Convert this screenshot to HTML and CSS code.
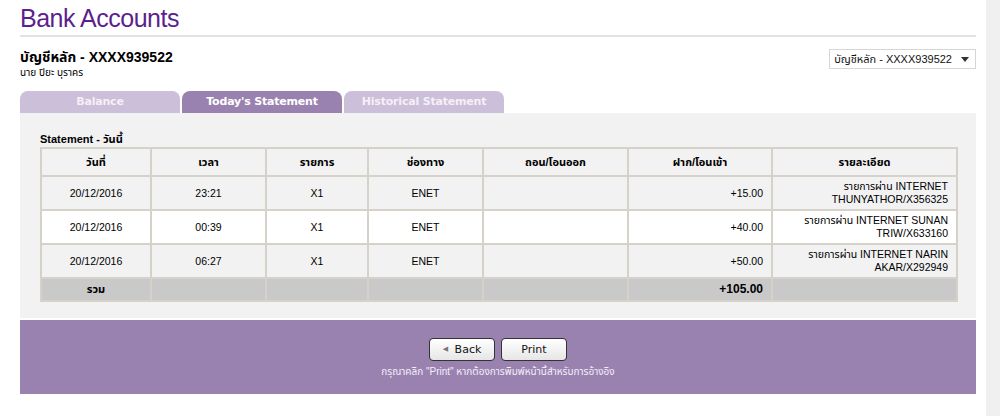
FILE: index.html
```html
<!DOCTYPE html>
<html>
<head>
<meta charset="utf-8">
<link rel="stylesheet" href="styles.css">
</head>
<body>
<div class="page">
  <div class="main">
    <h1 class="title">Bank Accounts</h1>
    <div class="acct-row">
      <div class="acct-info">
        <div class="acct-name">บัญชีหลัก - XXXX939522</div>
        <div class="acct-owner">นาย ปิยะ บุราคร</div>
      </div>
      <div class="select">
        <span>บัญชีหลัก - XXXX939522</span>
        <svg width="8" height="5" viewBox="0 0 8 5"><path d="M0 0h8L4 5z" fill="#333"/></svg>
      </div>
    </div>
    <div class="tabs">
      <div class="tab">Balance</div>
      <div class="tab active">Today's Statement</div>
      <div class="tab">Historical Statement</div>
    </div>
    <div class="panel">
      <div class="caption">Statement - วันนี้</div>
      <table class="stmt">
        <colgroup>
          <col style="width:110px"><col style="width:115px"><col style="width:102px"><col style="width:115px"><col style="width:145px"><col style="width:144px"><col style="width:185px">
        </colgroup>
        <thead>
          <tr><th>วันที่</th><th>เวลา</th><th>รายการ</th><th>ช่องทาง</th><th>ถอน/โอนออก</th><th>ฝาก/โอนเข้า</th><th>รายละเอียด</th></tr>
        </thead>
        <tbody>
          <tr class="odd"><td>20/12/2016</td><td>23:21</td><td>X1</td><td>ENET</td><td></td><td class="r">+15.00</td><td class="r"><span class="thai">รายการผ่าน</span> INTERNET<br>THUNYATHOR/X356325</td></tr>
          <tr class="even"><td>20/12/2016</td><td>00:39</td><td>X1</td><td>ENET</td><td></td><td class="r">+40.00</td><td class="r"><span class="thai">รายการผ่าน</span> INTERNET SUNAN<br>TRIW/X633160</td></tr>
          <tr class="odd"><td>20/12/2016</td><td>06:27</td><td>X1</td><td>ENET</td><td></td><td class="r">+50.00</td><td class="r"><span class="thai">รายการผ่าน</span> INTERNET NARIN<br>AKAR/X292949</td></tr>
          <tr class="total"><td class="b sum">รวม</td><td></td><td></td><td></td><td></td><td class="r b">+105.00</td><td></td></tr>
        </tbody>
      </table>
    </div>
    <div class="footer">
      <div class="buttons">
        <button class="btn"><span class="arrow">◀</span> Back</button>
        <button class="btn">Print</button>
      </div>
      <div class="note">กรุณาคลิก "Print" หากต้องการพิมพ์หน้านี้สำหรับการอ้างอิง</div>
    </div>
  </div>
  <div class="side"></div>
</div>
</body>
</html>
```
FILE: styles.css
```css
html, body {
  margin: 0;
  padding: 0;
  background: #fff;
  font-family: "Liberation Sans", "Noto Sans Thai", "Noto Sans", sans-serif;
  color: #000;
}
.page {
  display: flex;
  height: 416px;
}
.main {
  width: 956px;
  margin-left: 20px;
}
.side {
  width: 14px;
  margin-left: 10px;
  background: #f0f0f0;
}
.title {
  margin: 0;
  height: 35px;
  font-size: 25px;
  font-weight: normal;
  color: #5c1f8c;
  letter-spacing: -0.5px;
  line-height: 36px;
  border-bottom: 2px solid #e2e2e2;
}
.acct-row {
  display: flex;
  justify-content: space-between;
  align-items: flex-start;
  padding-top: 11px;
  height: 43px;
}
.acct-name {
  font-size: 14px;
  font-weight: bold;
  line-height: 18px;
}
.acct-owner {
  font-size: 10px;
  line-height: 14px;
}
.select {
  display: flex;
  align-items: center;
  gap: 9px;
  height: 18px;
  padding: 0 6px 0 4px;
  border: 1px solid #d6d6d6;
  font-size: 11px;
  color: #111;
  margin-top: 1px;
}
.tabs {
  display: flex;
  gap: 2px;
  height: 22px;
}
.tab {
  width: 160px;
  height: 22px;
  line-height: 22px;
  text-align: center;
  background: #cbbfd9;
  color: #f4f0f7;
  font-family: "DejaVu Sans", "Liberation Sans", sans-serif;
  font-weight: bold;
  font-size: 11px;
  letter-spacing: -0.2px;
  border-radius: 8px 8px 0 0;
}
.tab.active {
  background: #9a82b0;
  color: #fff;
}
.panel {
  background: #f2f2f2;
  padding: 19px 20px 16px;
  margin-bottom: 2px;
}
.caption {
  font-size: 11px;
  font-weight: bold;
  line-height: 14px;
  height: 15px;
}
.stmt {
  width: 916px;
  border-collapse: collapse;
  table-layout: fixed;
  font-size: 10.5px;
}
.stmt th, .stmt td {
  border: 2px solid #d6d2ca;
  text-align: center;
  padding: 0 8px;
}
.stmt th {
  height: 26px;
  font-size: 11px;
  font-weight: bold;
  background: #f2f2f2;
}
.stmt tr.odd td {
  background: #f2f2f2;
  height: 32px;
}
.stmt tr.even td {
  background: #fff;
  height: 32px;
}
.stmt td.r {
  text-align: right;
  padding-right: 8px;
  line-height: 13px;
}
.thai {
  font-size: 10.5px;
}
.stmt tr.total td {
  background: #c9c9c9;
  height: 21px;
}
.stmt td.b {
  font-weight: bold;
  font-size: 12px;
}
.stmt td.sum {
  font-size: 11px;
}
.footer {
  background: #9a82b0;
  height: 74px;
  display: flex;
  flex-direction: column;
  align-items: center;
  padding-top: 18px;
  box-sizing: border-box;
}
.buttons {
  display: flex;
  gap: 6px;
}
.btn {
  width: 66px;
  height: 23px;
  border: 1px solid #333;
  border-radius: 4px;
  background: linear-gradient(#ffffff, #e6e6e6);
  font-family: "DejaVu Sans", "Liberation Sans", sans-serif;
  font-size: 11px;
  color: #111;
  padding: 0;
  margin: 0;
}
.arrow {
  font-size: 7px;
  color: #777;
  vertical-align: 2px;
  margin-right: 3px;
}
.note {
  margin-top: 3px;
  font-size: 10px;
  color: #f3eef7;
}
```
